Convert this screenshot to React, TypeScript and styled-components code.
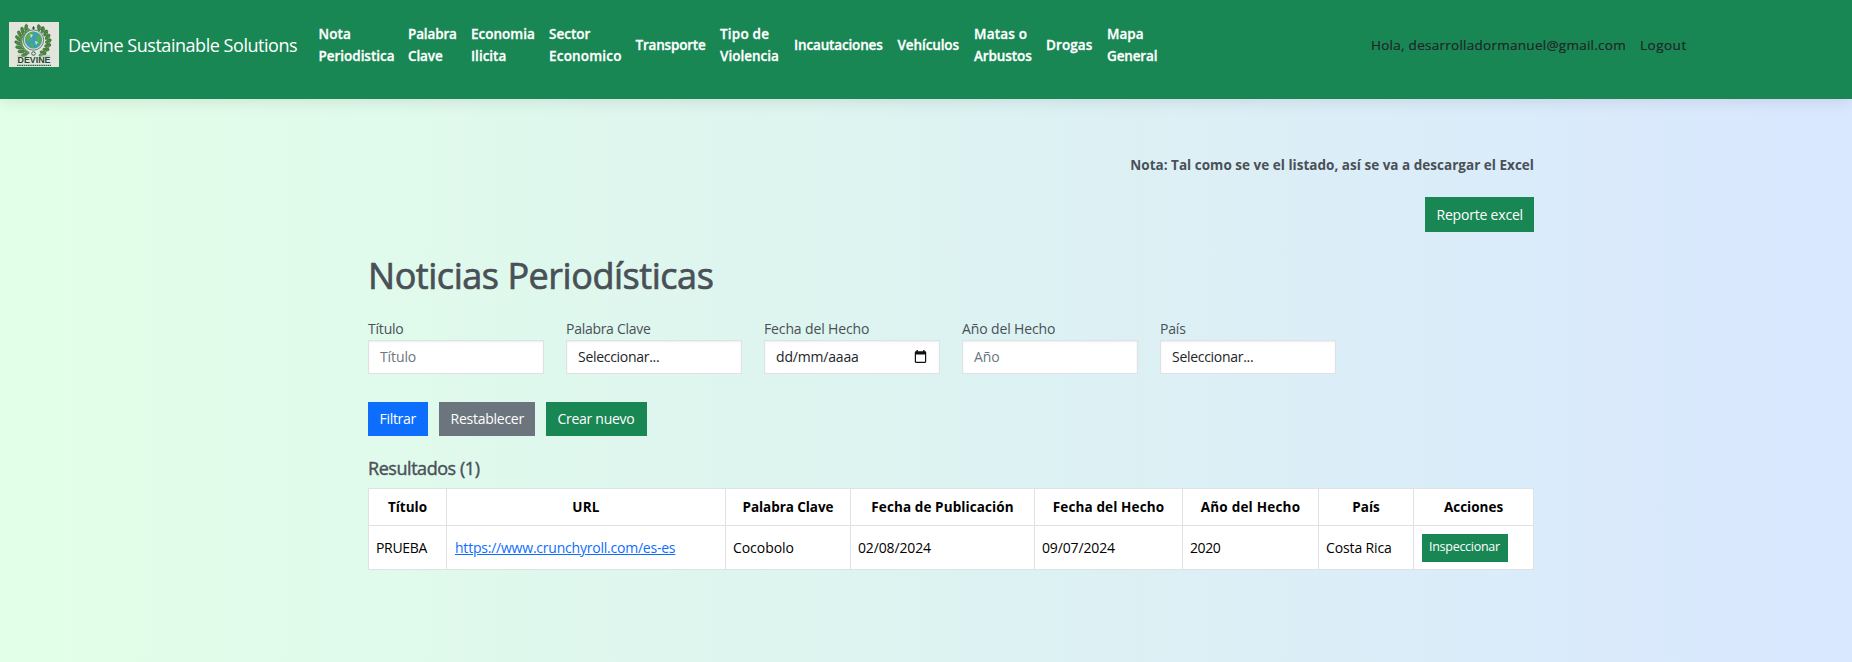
import React from 'react';
import styled, { createGlobalStyle } from 'styled-components';

const Global = createGlobalStyle`
  *, *::before, *::after { box-sizing: border-box; }
  body {
    margin: 0;
    font-family: "Segoe UI", "Open Sans", "Noto Sans", sans-serif;
    font-size: 14px;
    line-height: 22px;
    color: #495057;
  }
  h1, h2, p { margin: 0; }
`;

const Page = styled.div`
  min-height: 662px;
  background: linear-gradient(90deg, #e2ffe7 0%, #ddf3f1 50%, #d9e7ff 100%);
`;

const T = styled.span<{ $ls?: number }>`
  letter-spacing: ${p => p.$ls ?? 0}px;
  white-space: nowrap;
`;

const Header = styled.header`
  display: flex;
  align-items: center;
  height: 99px;
  padding: 0 0 10px 9px;
  background: #198754;
  color: #fff;
  box-shadow: 0 2px 15px rgba(0, 0, 0, 0.1);
`;

const Brand = styled.a`
  display: flex;
  align-items: center;
  gap: 9px;
  width: 309.5px;
  font-size: 18px;
`;

const Nav = styled.nav`
  display: grid;
  grid-template-columns: 89.5px 63px 78px 86.5px 84.5px 74px 103.5px 76.5px 72px 61px 264px;
  align-items: center;
  font-size: 13.5px;
  font-weight: 600;
  -webkit-text-stroke: 0.3px currentColor;
`;

const NavLink = styled.a`
  display: flex;
  flex-direction: column;
`;

const Account = styled.div`
  display: grid;
  grid-template-columns: 269px auto;
  color: #212529;
  font-size: 13.5px;
  -webkit-text-stroke: 0.2px currentColor;
`;

const Main = styled.main`
  width: 1166px;
  margin-left: 368px;
  padding-top: 55px;
`;

const Export = styled.div`
  display: flex;
  flex-direction: column;
  align-items: flex-end;
  gap: 21px;
`;

const Note = styled.p`
  font-size: 13.5px;
  font-weight: 700;
`;

const tones = { primary: '#0d6efd', secondary: '#6c757d', success: '#198754' };

const Button = styled.button<{ $tone: keyof typeof tones; $w: number; $h?: number; $small?: boolean }>`
  display: flex;
  align-items: center;
  width: ${p => p.$w}px;
  height: ${p => p.$h ?? 34}px;
  margin: 0 0 0 ${p => (p.$small ? 1 : 0)}px;
  padding: 0 0 ${p => (p.$small ? 1 : 0)}px ${p => (p.$small ? 7 : 11.5)}px;
  border: 0;
  background: ${p => tones[p.$tone]};
  color: #fff;
  font: inherit;
  font-size: ${p => (p.$small ? 12.5 : 14)}px;
`;

const Title = styled.h1`
  margin-top: 22px;
  font-size: 36px;
  line-height: 44px;
  font-weight: 400;
  -webkit-text-stroke: 0.7px currentColor;
`;

const Filters = styled.form`
  display: flex;
  gap: 22px;
  margin-top: 20px;
`;

const Field = styled.label`
  display: flex;
  flex-direction: column;
  width: 176px;
`;

const Control = styled.span<{ $muted?: boolean }>`
  display: flex;
  align-items: center;
  justify-content: space-between;
  height: 34px;
  padding: 0 12px 0 11px;
  border: 1px solid #dee2e6;
  background: #fff;
  box-shadow: inset 0 1px 2px rgba(0, 0, 0, 0.075);
  color: ${p => (p.$muted ? '#6c757d' : '#212529')};
`;

const Actions = styled.div`
  display: flex;
  gap: 11px;
  margin-top: 28px;
`;

const Results = styled.h2`
  margin-top: 20px;
  font-size: 18px;
  line-height: 24px;
  font-weight: 400;
  -webkit-text-stroke: 0.4px currentColor;
`;

const Table = styled.table`
  width: 1166px;
  margin-top: 8px;
  table-layout: fixed;
  border-collapse: collapse;
  background: #fff;
  color: #000;
  th, td { border: 1px solid #dee2e6; padding: 0 7px; }
  th { height: 37px; font-size: 13.5px; font-weight: 700; text-align: center; }
  td { height: 44px; text-align: left; }
`;

const Link = styled.a`
  margin-left: 1px;
  color: #0d6efd;
  text-decoration: underline;
`;

const wreath = Array.from({ length: 19 }, (_, i) => -62 + i * (304 / 18)).filter(a => a < 70 || a > 110);

const Logo = () => (
  <svg width="50" height="45" viewBox="0 0 50 45">
    <rect width="50" height="45" fill="#e3e5dc" />
    {wreath.map((a, i) => (
      <g key={a} transform={`translate(24.5 19.5) rotate(${a}) translate(14 0)`}>
        <ellipse cx="1.6" cy="-1" rx="3.3" ry="1.5" transform={`rotate(${i < 8 ? -35 : 35})`} fill="#4d8c3f" stroke="#2a5a34" strokeWidth=".5" />
        <ellipse cx="-0.6" cy="1.4" rx="2.7" ry="1.2" transform={`rotate(${i < 8 ? -80 : 80})`} fill="#6ea35a" stroke="#2f5f3c" strokeWidth=".4" />
      </g>
    ))}
    <circle cx="24.5" cy="18" r="10.2" fill="#d4dcd0" stroke="#45705a" strokeWidth=".8" />
    <circle cx="24.5" cy="18" r="8.6" fill="#3b9fb5" />
    <path d="M17 14c2-3 5-5 8-4l-1 3-3 1 1 3-3 3c-2-1-3-3-2-6zM27 15l4-2c2 3 2 7-1 10l-3-2 1-3zM22 21l3 1-1 4-3-2z" fill="#5cab55" />
    <path d="M21 12l3 1-2 3zM26 19l3 1-2 3z" fill="#c8e6df" />
    <path d="M23.2 6l1.3-2L25.8 6l-1.3 2z" fill="#24452f" />
    <circle cx="24.5" cy="31.5" r="1.8" fill="none" stroke="#35624c" />
    <path d="M8 34h10M31 34h10" stroke="#7b9a80" strokeWidth=".6" />
    <text x="8.5" y="41.4" textLength="33" lengthAdjust="spacingAndGlyphs" fontFamily="Liberation Sans, sans-serif" fontWeight="700" fontSize="8.2" fill="#1f4a35">DEVINE</text>
    <path d="M8 43.4h34" stroke="#3c5f4c" strokeWidth="1.1" strokeDasharray="1.6 .6" />
  </svg>
);

const CalendarIcon = () => (
  <svg width="13" height="14" viewBox="0 0 13 14">
    <path d="M2.5 0h1.4v1.3h5.2V0h1.4v1.3H11c.7 0 1.2.5 1.2 1.2v9.3c0 .7-.5 1.2-1.2 1.2H2c-.7 0-1.2-.5-1.2-1.2V2.5c0-.7.5-1.2 1.2-1.2h.5zM2 4.6v7.2h9V4.6z" fill="#111" fillRule="evenodd" />
  </svg>
);

type Piece = [string, number];

const links: Piece[][] = [
  [['Nota', 0.1], ['Periodistica', -0.03]],
  [['Palabra', -0.15], ['Clave', -0.1]],
  [['Economia', 0], ['Ilicita', 0]],
  [['Sector', 0], ['Economico', 0.2]],
  [['Transporte', -0.2]],
  [['Tipo de', 0.2], ['Violencia', 0]],
  [['Incautaciones', -0.15]],
  [['Vehículos', -0.1]],
  [['Matas o', 0.2], ['Arbustos', -0.1]],
  [['Drogas', 0.1]],
  [['Mapa', 0], ['General', -0.15]],
];

const columns: [string, number, number][] = [
  ['Título', 78, 0], ['URL', 279, 0.2], ['Palabra Clave', 125, -0.07], ['Fecha de Publicación', 184, 0.1],
  ['Fecha del Hecho', 148, 0.13], ['Año del Hecho', 136, 0.22], ['País', 95, -0.05], ['Acciones', 120, 0],
];

export default function App() {
  return (
    <Page>
      <Global />
      <Header>
        <Brand><Logo /><T $ls={-0.46}>Devine Sustainable Solutions</T></Brand>
        <Nav>
          {links.map(l => (
            <NavLink key={l[0][0]}>{l.map(([t, s]) => <T key={t} $ls={s}>{t}</T>)}</NavLink>
          ))}
        </Nav>
        <Account>
          <T $ls={0.27}>Hola, desarrolladormanuel@gmail.com</T>
          <T $ls={0.5}>Logout</T>
        </Account>
      </Header>
      <Main>
        <Export>
          <Note><T $ls={0.02}>Nota: Tal como se ve el listado, así se va a descargar el Excel</T></Note>
          <Button $tone="success" $w={109} $h={35}><T $ls={-0.2}>Reporte excel</T></Button>
        </Export>
        <Title><T $ls={-0.46}>Noticias Periodísticas</T></Title>
        <Filters>
          <Field><T $ls={-0.2}>Título</T><Control $muted><T $ls={-0.1}>Título</T></Control></Field>
          <Field><T $ls={-0.28}>Palabra Clave</T><Control><T $ls={-0.29}>Seleccionar...</T></Control></Field>
          <Field><T $ls={-0.13}>Fecha del Hecho</T><Control><T $ls={-0.18}>dd/mm/aaaa</T><CalendarIcon /></Control></Field>
          <Field><T $ls={-0.13}>Año del Hecho</T><Control $muted><T $ls={-0.1}>Año</T></Control></Field>
          <Field><T $ls={-0.2}>País</T><Control><T $ls={-0.29}>Seleccionar...</T></Control></Field>
        </Filters>
        <Actions>
          <Button $tone="primary" $w={60}><T $ls={-0.3}>Filtrar</T></Button>
          <Button $tone="secondary" $w={96}><T $ls={-0.25}>Restablecer</T></Button>
          <Button $tone="success" $w={101}><T $ls={-0.28}>Crear nuevo</T></Button>
        </Actions>
        <Results><T $ls={-0.45}>Resultados (1)</T></Results>
        <Table>
          <colgroup>{columns.map(([t, w]) => <col key={t} width={w} />)}</colgroup>
          <thead><tr>{columns.map(([t, , s]) => <th key={t}><T $ls={s}>{t}</T></th>)}</tr></thead>
          <tbody>
            <tr>
              <td><T $ls={-0.32}>PRUEBA</T></td>
              <td><Link><T $ls={-0.22}>https://www.crunchyroll.com/es-es</T></Link></td>
              <td><T $ls={-0.06}>Cocobolo</T></td>
              <td><T $ls={-0.14}>02/08/2024</T></td>
              <td><T $ls={-0.14}>09/07/2024</T></td>
              <td><T $ls={-0.4}>2020</T></td>
              <td><T $ls={-0.13}>Costa Rica</T></td>
              <td><Button $tone="success" $w={86} $h={28} $small><T $ls={-0.28}>Inspeccionar</T></Button></td>
            </tr>
          </tbody>
        </Table>
      </Main>
    </Page>
  );
}
